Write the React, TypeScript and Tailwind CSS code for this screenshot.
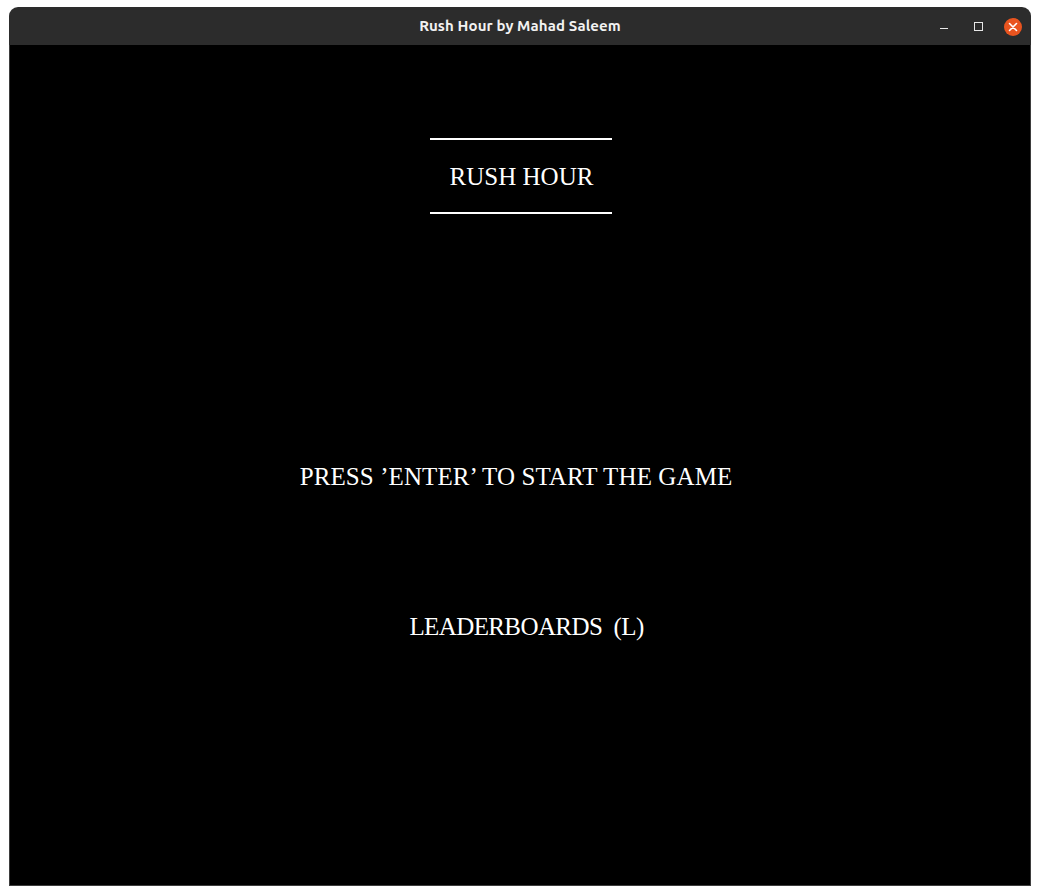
export default function App() {
  const serif = { fontFamily: '"Liberation Serif", "Times New Roman", serif' } as const;
  return (
    <div className="w-[1040px] h-[895px] bg-white pt-[7px] pl-[9px]">
      <div className="w-[1022px] h-[879px] flex flex-col">
        <div className="h-[38px] bg-[#2c2c2c] rounded-t-[9px] relative flex items-center justify-center shrink-0">
          <span
            className="text-[#f2f2f2] text-[15px] font-bold tracking-[0.1px]"
            style={{ fontFamily: '"Ubuntu", "Noto Sans", "Open Sans", sans-serif' }}
          >
            Rush Hour by Mahad Saleem
          </span>
          <div className="absolute right-[9px] top-0 h-[38px] flex items-center">
            <div className="w-[8px] h-[1px] bg-[#e8e8e8] mt-[5px] mr-[26px]" />
            <div className="w-[9px] h-[9px] border border-[#e8e8e8] mr-[21px] mt-[1px]" />
            <div className="w-[18px] h-[18px] rounded-full bg-[#e9541f] flex items-center justify-center mt-[1px]">
              <svg width="10" height="10" viewBox="0 0 10 10">
                <path d="M1.5 1.5 L8.5 8.5 M8.5 1.5 L1.5 8.5" stroke="#ffffff" strokeWidth="1.6" strokeLinecap="round" />
              </svg>
            </div>
          </div>
        </div>
        <div className="flex-1 bg-black border border-t-0 border-[#3d3d3d] flex flex-col items-center text-white" style={serif}>
          <div className="w-[182px] h-[2px] bg-white mt-[93px] ml-[2px]" />
          <div className="text-[25px] leading-[25px] mt-[24px] ml-[3px] whitespace-pre">RUSH HOUR</div>
          <div className="w-[182px] h-[2px] bg-white mt-[23px] ml-[2px]" />
          <div className="text-[25px] leading-[25px] mt-[250px] mr-[8px] tracking-[0.1px] whitespace-pre">PRESS ’ENTER’ TO START THE GAME</div>
          <div className="text-[25px] leading-[25px] mt-[125px] ml-[13px] tracking-[-0.6px] whitespace-pre">LEADERBOARDS  (L)</div>
        </div>
      </div>
    </div>
  );
}
